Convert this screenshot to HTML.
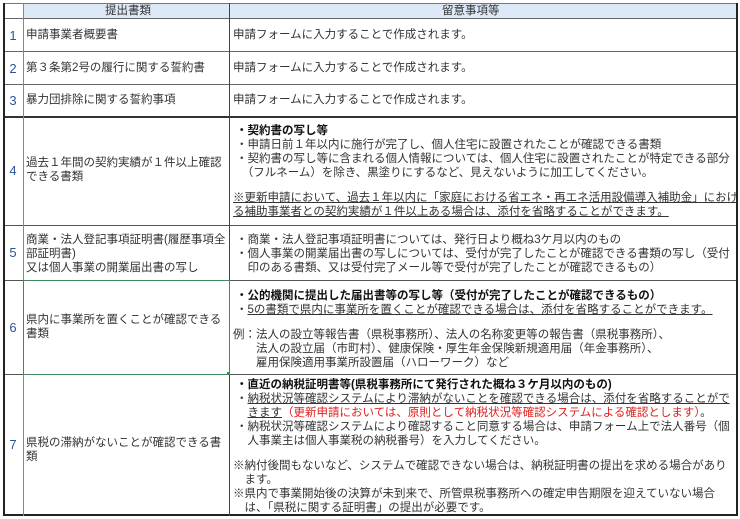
<!DOCTYPE html>
<html><head><meta charset="utf-8"><style>
body{margin:0;width:740px;height:519px;background:#fff;position:relative;overflow:hidden;font-family:"Liberation Sans","Noto Sans CJK JP",sans-serif;font-size:11.5px;color:#333}
.l{position:absolute;white-space:nowrap;line-height:14px}
.h{position:absolute;background:#000}
.v{position:absolute;background:#000}
.n{position:absolute;color:#2f5597;font-size:13px;width:20px;text-align:center}
b{font-weight:bold;color:#111}
u{text-decoration:underline}
.r{color:#e02020}
</style></head><body>
<div style="position:absolute;left:23px;top:3px;width:714px;height:16px;background:#dde9f6"></div>
<div class="h" style="left:3px;top:3px;width:735px;height:1px;background:#777"></div>
<div class="h" style="left:3px;top:18px;width:735px;height:1px;background:#666"></div>
<div class="h" style="left:3px;top:51px;width:735px;height:1px;background:#666"></div>
<div class="h" style="left:3px;top:84px;width:735px;height:1px;background:#666"></div>
<div class="h" style="left:3px;top:116px;width:735px;height:2px;background:#333"></div>
<div class="h" style="left:3px;top:225px;width:735px;height:1px;background:#555"></div>
<div class="h" style="left:3px;top:280px;width:735px;height:1px;background:#555"></div>
<div class="h" style="left:3px;top:374px;width:735px;height:1px;background:#555"></div>
<div class="h" style="left:3px;top:514px;width:735px;height:2px;background:#222"></div>
<div class="v" style="left:3px;top:3px;width:2px;height:513px;background:#222"></div>
<div class="v" style="left:23px;top:3px;width:1px;height:513px;background:#888"></div>
<div class="v" style="left:229px;top:3px;width:1px;height:513px;background:#444"></div>
<div class="v" style="left:736px;top:3px;width:2px;height:513px;background:#222"></div>
<div style="position:absolute;left:23px;top:280px;width:205px;height:93px;border:1px solid #3e8a5a"></div>
<div style="position:absolute;left:227px;top:372px;width:3px;height:3px;background:#3e8a5a"></div>

<div class="l" style="left:105px;top:4px">提出書類</div>
<div class="l" style="left:442px;top:4px">留意事項等</div>

<div class="n" style="left:3px;top:28px">1</div>
<div class="l" style="left:26px;top:28px">申請事業者概要書</div>
<div class="l" style="left:233px;top:28px">申請フォームに入力することで作成されます。</div>
<div class="n" style="left:3px;top:61px">2</div>
<div class="l" style="left:26px;top:61px">第３条第2号の履行に関する誓約書</div>
<div class="l" style="left:233px;top:61px">申請フォームに入力することで作成されます。</div>
<div class="n" style="left:3px;top:93px">3</div>
<div class="l" style="left:26px;top:93px">暴力団排除に関する誓約事項</div>
<div class="l" style="left:233px;top:93px">申請フォームに入力することで作成されます。</div>

<div class="n" style="left:3px;top:163px">4</div>
<div class="l" style="left:26px;top:156px">過去１年間の契約実績が１件以上確認</div>
<div class="l" style="left:26px;top:170px">できる書類</div>
<div class="l" style="left:236px;top:124px"><b>・契約書の写し等</b></div>
<div class="l" style="left:236px;top:138px">・申請日前１年以内に施行が完了し、個人住宅に設置されたことが確認できる書類</div>
<div class="l" style="left:236px;top:152px">・契約書の写し等に含まれる個人情報については、個人住宅に設置されたことが特定できる部分</div>
<div class="l" style="left:236px;top:166px">　（フルネーム）を除き、黒塗りにするなど、見えないように加工してください。</div>
<div class="l" style="left:233px;top:191px"><u>※更新申請において、過去１年以内に「家庭における省エネ・再エネ活用設備導入補助金」におけ</u></div>
<div class="l" style="left:233px;top:205px"><u>る補助事業者との契約実績が１件以上ある場合は、添付を省略することができます。</u></div>

<div class="n" style="left:3px;top:245px">5</div>
<div class="l" style="left:26px;top:233px">商業・法人登記事項証明書(履歴事項全</div>
<div class="l" style="left:26px;top:247px">部証明書)</div>
<div class="l" style="left:26px;top:261px">又は個人事業の開業届出書の写し</div>
<div class="l" style="left:236px;top:233px">・商業・法人登記事項証明書については、発行日より概ね3ケ月以内のもの</div>
<div class="l" style="left:236px;top:247px">・個人事業の開業届出書の写しについては、受付が完了したことが確認できる書類の写し（受付</div>
<div class="l" style="left:236px;top:261px">　印のある書類、又は受付完了メール等で受付が完了したことが確認できるもの）</div>

<div class="n" style="left:3px;top:320px">6</div>
<div class="l" style="left:26px;top:313px">県内に事業所を置くことが確認できる</div>
<div class="l" style="left:26px;top:327px">書類</div>
<div class="l" style="left:236px;top:289px"><b>・公的機関に提出した届出書等の写し等（受付が完了したことが確認できるもの）</b></div>
<div class="l" style="left:236px;top:303px">・<u>5の書類で県内に事業所を置くことが確認できる場合は、添付を省略することができます。</u></div>
<div class="l" style="left:233px;top:328px">例：法人の設立等報告書（県税事務所）、法人の名称変更等の報告書（県税事務所）、</div>
<div class="l" style="left:233px;top:342px">　　法人の設立届（市町村）、健康保険・厚生年金保険新規適用届（年金事務所）、</div>
<div class="l" style="left:233px;top:356px">　　雇用保険適用事業所設置届（ハローワーク）など</div>

<div class="n" style="left:3px;top:437px">7</div>
<div class="l" style="left:26px;top:436px">県税の滞納がないことが確認できる書</div>
<div class="l" style="left:26px;top:450px">類</div>
<div class="l" style="left:236px;top:378px"><b>・直近の納税証明書等(県税事務所にて発行された概ね３ケ月以内のもの)</b></div>
<div class="l" style="left:236px;top:392px">・<u>納税状況等確認システムにより滞納がないことを確認できる場合は、添付を省略することがで</u></div>
<div class="l" style="left:236px;top:406px">　<u>きます</u><span class="r">（更新申請においては、原則として納税状況等確認システムによる確認とします）</span>。</div>
<div class="l" style="left:236px;top:420px">・納税状況等確認システムにより確認すること同意する場合は、申請フォーム上で法人番号（個</div>
<div class="l" style="left:236px;top:434px">　人事業主は個人事業税の納税番号）を入力してください。</div>
<div class="l" style="left:233px;top:459px">※納付後間もないなど、システムで確認できない場合は、納税証明書の提出を求める場合があり</div>
<div class="l" style="left:233px;top:473px">　ます。</div>
<div class="l" style="left:233px;top:487px">※県内で事業開始後の決算が未到来で、所管県税事務所への確定申告期限を迎えていない場合</div>
<div class="l" style="left:233px;top:501px">　は、「県税に関する証明書」の提出が必要です。</div>
</body></html>
